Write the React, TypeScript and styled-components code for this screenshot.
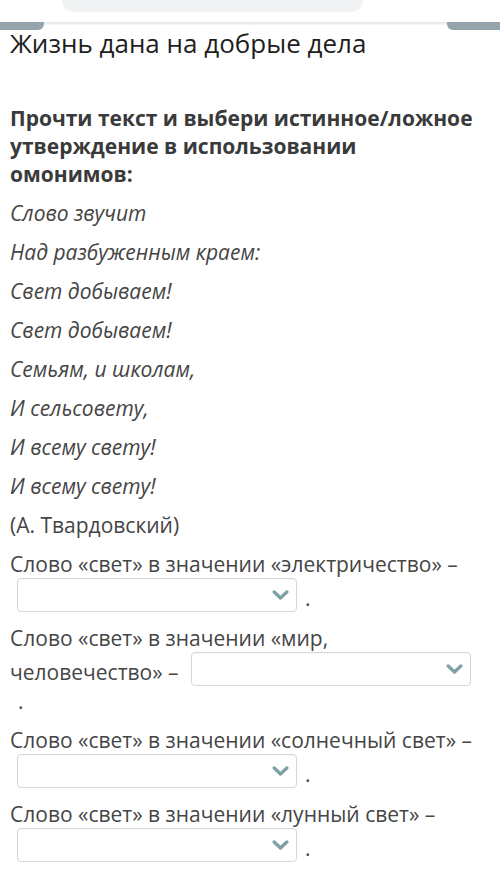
import React from "react";
import styled, { createGlobalStyle } from "styled-components";

const Global = createGlobalStyle`
  html, body { margin: 0; padding: 0; background: #ffffff; }
  body { font-family: "Open Sans", "Noto Sans", sans-serif; }
`;

const Page = styled.div`
  width: 500px;
  min-height: 890px;
  background: #fff;
  overflow: hidden;
`;

const TopArea = styled.div`
  height: 30px;
  display: flex;
  flex-direction: column;
`;

const SearchPill = styled.div`
  margin-left: 62px;
  width: 301px;
  height: 11px;
  background: #f0f2f3;
  border-radius: 0 0 14px 14px;
  box-shadow: 0 1px 1px rgba(0, 0, 0, 0.04);
`;

const Strip = styled.div`
  margin-top: 11px;
  height: 8px;
  display: flex;
`;

const Tab = styled.div<{ $side: "left" | "right"; $w: number }>`
  width: ${(p) => p.$w}px;
  height: 8px;
  background: #94a5ac;
  border-radius: ${(p) => (p.$side === "left" ? "0 0 6px 0" : "0 0 0 6px")};
`;

const StripMid = styled.div`
  flex: 1;
  height: 3px;
  background: linear-gradient(#e4e6e7, #f5f6f6);
`;

const Content = styled.div`
  padding: 0 22px 0 10px;
`;

const Title = styled.h1`
  margin: 0;
  font-size: 26px;
  line-height: 26px;
  font-weight: 400;
  color: #1e1e1e;
`;

const Heading = styled.h2`
  margin: 48px 0 0;
  font-size: 21px;
  line-height: 28px;
  font-weight: 700;
  color: #3a3a3a;
`;

const Line = styled.p<{ $italic?: boolean }>`
  margin: 11px 0 0;
  font-size: 21px;
  line-height: 28px;
  font-style: ${(p) => (p.$italic ? "italic" : "normal")};
  color: #454545;
`;

const Question = styled.p`
  margin: 11px 0 0;
  font-size: 21px;
  line-height: 28px;
  color: #454545;
`;

const SelectBox = styled.span`
  display: inline-block;
  overflow: hidden;
  box-sizing: border-box;
  width: 280px;
  height: 34px;
  margin: 0 0 1px 7px;
  vertical-align: -7px;
  border: 1px solid #cfdbdb;
  border-radius: 4px;
  background: #fff;
  box-shadow: inset 0 1px 1px rgba(0, 0, 0, 0.03);
`;

const SelectInner = styled.span`
  display: flex;
  height: 100%;
  align-items: center;
  justify-content: flex-end;
  padding-right: 7px;
`;

const Dot = styled.span`
  display: inline-block;
  margin-left: 8px;
`;

const Chevron = () => (
  <svg width="17" height="10" viewBox="0 0 17 10" aria-hidden="true">
    <path
      d="M2.2 2 L8.5 8 L14.8 2"
      fill="none"
      stroke="#7fa2a7"
      strokeWidth="3.4"
      strokeLinecap="round"
      strokeLinejoin="round"
    />
  </svg>
);

const Select = () => (
  <SelectBox>
    <SelectInner>
      <Chevron />
    </SelectInner>
  </SelectBox>
);

const poem = [
  "Слово звучит",
  "Над разбуженным краем:",
  "Свет добываем!",
  "Свет добываем!",
  "Семьям, и школам,",
  "И сельсовету,",
  "И всему свету!",
  "И всему свету!",
];

const questions = [
  "Слово «свет» в значении «электричество» –",
  "Слово «свет» в значении «мир, человечество» –",
  "Слово «свет» в значении «солнечный свет» –",
  "Слово «свет» в значении «лунный свет» –",
];

export default function App() {
  return (
    <Page>
      <Global />
      <TopArea>
        <SearchPill />
        <Strip>
          <Tab $side="left" $w={44} />
          <StripMid />
          <Tab $side="right" $w={53} />
        </Strip>
      </TopArea>
      <Content>
        <Title>Жизнь дана на добрые дела</Title>
        <Heading>Прочти текст и выбери истинное/ложное утверждение в использовании омонимов:</Heading>
        {poem.map((l, i) => (
          <Line key={i} $italic>
            {l}
          </Line>
        ))}
        <Line>(А. Твардовский)</Line>
        {questions.map((q, i) => (
          <Question key={i}>
            {q} <Select />
            <Dot>.</Dot>
          </Question>
        ))}
      </Content>
    </Page>
  );
}
